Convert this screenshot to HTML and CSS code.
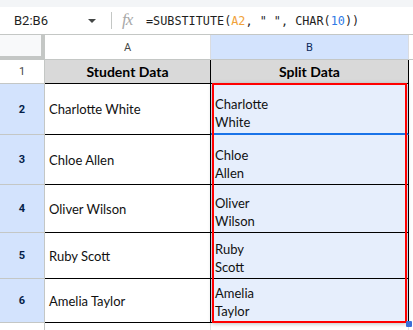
FILE: index.html
```html
<!DOCTYPE html>
<html>
<head>
<meta charset="utf-8">
<link rel="stylesheet" href="styles.css">
</head>
<body>
<div class="topstrip"></div>
<div class="fbar">
  <div class="namebox">B2:B6</div>
  <div class="arrow"></div>
  <div class="sep"></div>
  <div class="fx">fx</div>
  <div class="formula">=SUBSTITUTE(<span class="ref">A2</span>, " ", CHAR(<span class="num">10</span>))</div>
</div>
<div class="grid">
  <div class="corner"></div>
  <div class="colh">A</div>
  <div class="colh sel">B</div>
  <div class="colh rest"></div>

  <div class="rowh">1</div>
  <div class="cell head">Student Data</div>
  <div class="cell head">Split Data</div>
  <div class="cell rest"></div>

  <div class="rowh sel">2</div>
  <div class="cell a">Charlotte White</div>
  <div class="cell b active">Charlotte<br>White</div>
  <div class="cell rest"></div>

  <div class="rowh sel">3</div>
  <div class="cell a">Chloe Allen</div>
  <div class="cell b">Chloe<br>Allen</div>
  <div class="cell rest"></div>

  <div class="rowh sel">4</div>
  <div class="cell a">Oliver Wilson</div>
  <div class="cell b">Oliver<br>Wilson</div>
  <div class="cell rest"></div>

  <div class="rowh sel">5</div>
  <div class="cell a">Ruby Scott</div>
  <div class="cell b">Ruby<br>Scott</div>
  <div class="cell rest"></div>

  <div class="rowh sel">6</div>
  <div class="cell a">Amelia Taylor</div>
  <div class="cell b">Amelia<br>Taylor</div>
  <div class="cell rest"></div>

  <div class="rowh last"></div>
  <div class="cell blank"></div>
  <div class="cell blank"></div>
  <div class="cell rest"></div>

  <div class="redbox"></div>
  <div class="handle"></div>
</div>
</body>
</html>
```

FILE: styles.css
```css
html, body {
  margin: 0;
  padding: 0;
  background: #ffffff;
  width: 413px;
  height: 330px;
  overflow: hidden;
}

.topstrip {
  height: 7px;
  background: #f3f5f7;
}

.fbar {
  height: 27px;
  border-bottom: 1px solid #c4c7c5;
  display: flex;
  align-items: center;
  font-family: Roboto, "Liberation Sans", sans-serif;
  color: #1f1f1f;
}

.namebox {
  margin-left: 14px;
  width: 74px;
  font-size: 13px;
}

.arrow {
  width: 0;
  height: 0;
  border-left: 4px solid transparent;
  border-right: 4px solid transparent;
  border-top: 4px solid #444746;
  margin-right: 15px;
}

.sep {
  width: 1px;
  height: 17px;
  background: #c4c7c5;
  margin-right: 10px;
}

.fx {
  font-family: "Liberation Serif", serif;
  font-style: italic;
  font-size: 17px;
  color: #a8a8a8;
  width: 24px;
  letter-spacing: -1px;
  margin-top: -2px;
}

.formula {
  font-family: "DejaVu Sans Mono", "Liberation Mono", monospace;
  font-size: 11.8px;
  color: #1f1f1f;
}

.formula .ref { color: #f1a23a; }
.formula .num { color: #2f7ae5; }

.grid {
  position: relative;
  display: grid;
  grid-template-columns: 45px 166px 198px 1fr;
  grid-template-rows: 25px 24px 51px 50px 48px 46px 44px 1fr;
  height: 295px;
}

.corner {
  background: #f8f9fa;
  border-right: 4px solid #c4c7c5;
  border-bottom: 4px solid #c4c7c5;
}

.colh {
  display: flex;
  align-items: center;
  justify-content: center;
  font-family: Roboto, "Liberation Sans", sans-serif;
  font-size: 11px;
  color: #444746;
  border-right: 1px solid #dadce0;
  border-bottom: 1px solid #c4c7c5;
  background: #ffffff;
}

.colh.sel {
  background: #d3e3fd;
  color: #0b2a5b;
}

.colh.rest {
  border-right: none;
}

.rowh {
  display: flex;
  align-items: center;
  justify-content: center;
  font-family: Roboto, "Liberation Sans", sans-serif;
  font-size: 11px;
  color: #444746;
  border-right: 1px solid #c4c7c5;
  border-bottom: 1px solid #c4c7c5;
  background: #ffffff;
}

.rowh.sel {
  background: #d3e3fd;
  color: #041e49;
  font-weight: bold;
}

.cell {
  font-family: Lato, "Liberation Sans", sans-serif;
  font-size: 13px;
  color: #111111;
  border-right: 1px solid #000000;
  border-bottom: 1px solid #000000;
}

.cell.head {
  background: #d9d9d9;
  font-weight: bold;
  display: flex;
  align-items: center;
  justify-content: center;
  font-size: 14px;
  color: #000000;
}

.cell.a {
  display: flex;
  align-items: center;
  padding-left: 4px;
}

.cell.b {
  background: #e6eefc;
  display: flex;
  flex-direction: column;
  justify-content: flex-end;
  padding-left: 4px;
  padding-bottom: 2px;
  line-height: 18px;
}

.cell.b.active {
  border-bottom: 2px solid #1a73e8;
}

.cell.rest {
  border-right: none;
  border-bottom: none;
  background: #ffffff;
}

.cell.blank {
  border-bottom: none;
  border-right: 1px solid #e1e1e1;
}

.rowh.last {
  border-bottom: none;
}

.redbox {
  position: absolute;
  left: 212px;
  top: 48px;
  width: 191px;
  height: 236px;
  border: 2.5px solid #ff0000;
  box-shadow: 0 1px 4px rgba(0, 0, 0, 0.25);
}

.handle {
  position: absolute;
  left: 406px;
  top: 286px;
  width: 6px;
  height: 6px;
  border-radius: 1px;
  background: #3a6fd8;
}
```
